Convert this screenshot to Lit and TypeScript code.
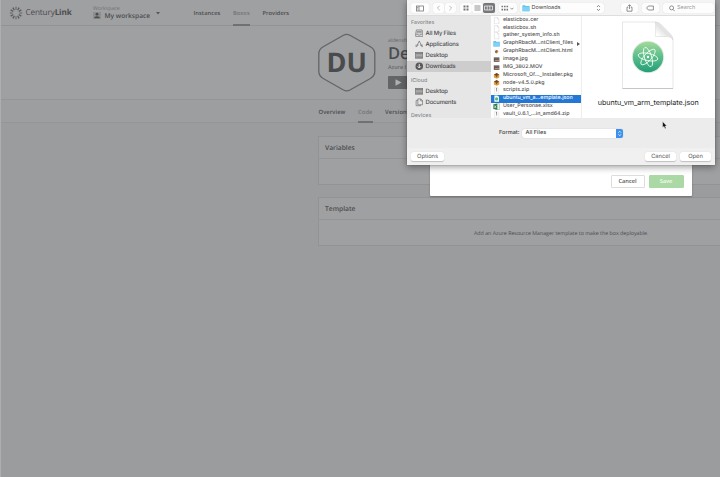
import { LitElement, html, css, svg } from "lit";
import { customElement } from "lit/decorators.js";

const files: [string, string][] = [
  ["elasticbox.cer", "doc"],
  ["elasticbox.sh", "doc"],
  ["gather_system_info.sh", "doc"],
  ["GraphRbacM…ntClient_files", "folder"],
  ["GraphRbacM…ntClient.html", "chrome"],
  ["image.jpg", "img"],
  ["IMG_3802.MOV", "img"],
  ["Microsoft_Of…_Installer.pkg", "pkg"],
  ["node-v4.5.0.pkg", "pkg"],
  ["scripts.zip", "zip"],
  ["ubuntu_vm_a…emplate.json", "json"],
  ["User_Personae.xlsx", "xls"],
  ["vault_0.6.1_…in_amd64.zip", "zip"],
];

const fileIcon = (kind: string) => {
  switch (kind) {
    case "folder":
      return svg`<path d="M.5 1.2h2.4l.7.7h3.9v5.3h-7z" fill="#62bfe8"/><path d="M.5 2.8h7v4.4h-7z" fill="#7fd2f5"/>`;
    case "chrome":
      return svg`<path d="M2 .6h4v6.8H2z" fill="#fafafa"/><circle cx="4" cy="4" r="1.8" fill="#d9533f"/><path d="M4 4l1.8 0A1.8 1.8 0 0 1 4 5.8z" fill="#e8c23a"/><path d="M4 5.8A1.8 1.8 0 0 1 2.2 4H4z" fill="#3c9a54"/><circle cx="4" cy="4" r=".7" fill="#49699a"/>`;
    case "img":
      return svg`<rect x=".9" y="1.6" width="6.2" height="4.9" fill="#5b5050"/><path d="M1.3 5.5l2-1.7 1.2.9 1.2-1.2 1.1 1.4v1z" fill="#a99488"/><path d="M1.3 2.1h5.4v.7H1.3z" fill="#84797a"/>`;
    case "pkg":
      return svg`<path d="M1 3l3-2 3 2v3L4 7.6 1 6z" fill="#dfa13c"/><path d="M1 3l3 1.5L7 3 4 1z" fill="#70462c"/><path d="M3.3 4.2h1.4v1.6H3.3z" fill="#8a5528"/>`;
    case "zip":
      return svg`<path d="M1.6.5h3.4L6.5 2v5.5H1.6z" fill="#fcfcfc" stroke="#d5d5d5" stroke-width=".4"/><path d="M4 1v4M3.3 1.8h1" stroke="#777" stroke-width=".8"/>`;
    case "json":
      return svg`<path d="M1.5.5h3.5L6.7 2v5.5H1.5z" fill="#f3fff7"/><circle cx="4" cy="4.4" r="1.8" fill="#54b980"/>`;
    case "xls":
      return svg`<path d="M3 .8h4.4v6.5H3z" fill="#eef7ef" stroke="#6fa37e" stroke-width=".5"/><path d="M.4 1.3l4.4-.5v6.6l-4.4-.6z" fill="#2c7c4c"/><path d="M1.5 2.8l2 2.8M3.5 2.8l-2 2.8" stroke="#fff" stroke-width=".7"/>`;
    default:
      return svg`<path d="M1.5.4h3.4l1.7 1.8v5.4H1.5z" fill="#fff" stroke="#c6c6c6" stroke-width=".45"/><path d="M4.9.4v1.8h1.7" fill="none" stroke="#c6c6c6" stroke-width=".45"/>`;
  }
};

const sideIcon = (kind: string) => {
  switch (kind) {
    case "all":
      return svg`<path d="M1.5 1h6l.8 4v2.8H.7V5z"/><path d="M2 2.6h5M1.8 4h5.4M.8 5.5h2.1l.6.9h2l.6-.9h2.1"/>`;
    case "apps":
      return svg`<path d="M1.5 7.5L4.5 1l3 6.5M.5 5.4h3.2M5.4 5.4h3.2M.7 7.3l.5-.8M8.3 7.3l-.5-.8"/>`;
    case "desk":
      return svg`<rect x=".7" y="1.4" width="7.6" height="6.2" fill="#a9a9aa"/><path d="M.7 2.8h7.6M1.5 6.4h6"/>`;
    case "down":
      return svg`<circle cx="4.5" cy="4.5" r="4" fill="#57575a" stroke="none"/><path d="M4.5 2v4M2.8 4.6l1.7 1.8 1.7-1.8" stroke="#eee" stroke-width="1"/>`;
    default:
      return svg`<path d="M3 1h3.2L8 2.8v4.4H3zM3 2.5H1.2v5.7h4.6v-1M6 1v2h2"/>`;
  }
};

@customElement("app-sidebar-item")
export class SidebarItem extends LitElement {
  static properties = { icon: {}, label: {}, active: { type: Boolean, reflect: true } };
  declare icon: string;
  declare label: string;
  declare active: boolean;
  static styles = css`
    :host { display: flex; align-items: center; height: 11.2px; padding-left: 7.5px; gap: 2.6px; color: #48484a; font: 500 5.85px/9px Inter, sans-serif; letter-spacing: -.13px; white-space: nowrap; }
    :host([active]) { background: #cdcdce; }
    svg { width: 8.5px; height: 8.5px; fill: none; stroke: #69696b; stroke-width: 0.7; flex: none; }
  `;
  render() {
    return html`<svg viewBox="0 0 9 9">${sideIcon(this.icon)}</svg><span>${this.label}</span>`;
  }
}

@customElement("app-file-dialog")
export class FileDialog extends LitElement {
  static styles = css`
    :host { display: flex; flex-direction: column; width: 308px; height: 165px; background: #ececec; box-shadow: 0 2px 7px rgba(0,0,0,.4), 0 0 1px rgba(0,0,0,.4); font-family: Inter, sans-serif; color: #444; box-sizing: border-box; overflow: hidden; }
    .bar { height: 16px; flex: none; display: flex; align-items: center; background: #f4f4f4; border-bottom: 1px solid #dedede; box-sizing: border-box; padding: 1px 0 0 4px; }
    .b { height: 10px; background: #fdfdfd; border-radius: 2px; box-shadow: 0 0 1px rgba(0,0,0,.17); display: flex; align-items: center; justify-content: center; box-sizing: border-box; flex: none; }
    .b svg { fill: none; stroke: #777; stroke-width: .8; flex: none; }
    .w11 { width: 11.5px; } .w17 { width: 17px; } .w18 { width: 18px; }
    .panel { width: 18px; }
    .back { margin-left: 3.5px; } .fwd { margin-left: .5px; } .grid { margin-left: 4px; }
    .on { background: #77777a; border-radius: 2px; }
    .on svg { stroke: #eee; }
    .arr { margin-left: 4px; } .path { margin-left: 3px; width: 84px; justify-content: flex-start; padding: 0 3px 0 2px; gap: 2px; font: 5.5px/9px Inter, sans-serif; }
    .path span { flex: 1; }
    .path .folder { stroke: none; }
    .share { margin-left: 17px; } .tag { margin-left: 4px; }
    .search { margin-left: 4px; width: 51px; justify-content: flex-start; gap: 2.5px; padding-left: 6px; color: #999; font: 5.5px/9px Inter, sans-serif; }
    .body { display: flex; height: 102px; flex: none; }
    .side { width: 83.5px; background: #e6e6e7; padding-top: 1.5px; box-sizing: border-box; overflow: hidden; }
    .head { font: 500 5.3px/10px Inter, sans-serif; color: #88888a; padding-left: 4px; height: 10px; }
    .cloud { margin-top: 3.6px; } .dev { margin-top: 3px; }
    .list { width: 91px; background: #fff; border-right: 1px solid #eee; box-sizing: border-box; overflow: hidden; }
    .row { display: flex; align-items: center; height: 7.85px; gap: 3.2px; padding-left: 2px; font: 450 5.27px/7.8px Inter, sans-serif; white-space: nowrap; color: #505050; }
    .row:first-child { margin-top: .4px; }
    .row svg { width: 7.2px; height: 7.2px; flex: none; }
    .row .name { width: 73px; padding-top: .7px; }
    .sel { background: #2377d5; color: #fff; }
    .row .tri { width: 3px; height: 4px; margin-left: -2.5px; }
    .preview { flex: 1; background: #fff; display: flex; flex-direction: column; align-items: center; padding-top: 4px; }
    .preview svg { width: 56px; height: 72px; }
    .cap { font: 7.15px/10px Inter, sans-serif; color: #242424; margin-top: 5.5px; white-space: nowrap; }
    .format { height: 30px; padding-top: 1px; box-sizing: border-box; flex: none; display: flex; align-items: center; font: 500 5.6px/9px Inter, sans-serif; padding-left: 92px; gap: 3px; }
    .format span { width: 20px; white-space: nowrap; }
    .select { width: 101px; height: 9px; background: #fff; border-radius: 2px; box-shadow: 0 0 1px rgba(0,0,0,.3); display: flex; justify-content: space-between; align-items: center; padding-left: 3.5px; box-sizing: border-box; overflow: hidden; }
    .select svg { width: 7.5px; height: 9px; background: #3d91ee; }
    .foot { height: 17px; display: flex; align-items: center; background: #f0f0f0; padding: 0 4px; gap: 4px; }
    .btn { height: 9.5px; width: 31px; background: #fff; border-radius: 2px; box-shadow: 0 .5px 1px rgba(0,0,0,.2); display: flex; align-items: center; justify-content: center; font: 5.7px/9px Inter, sans-serif; color: #555; }
    .opt { width: 33px; margin: 0 auto 0 0; }
  `;
  render() {
    return html`
      <div class="bar">
        <div class="b panel"><svg width="8" height="7"><rect x=".5" y="1" width="7" height="5"/><path d="M3 1v5M1.2 2.5h1M1.2 4h1"/></svg></div>
        <div class="b w11 back"><svg width="5" height="6"><path d="M3.6.8L1.4 3l2.2 2.2" stroke="#aaa"/></svg></div>
        <div class="b w11 fwd"><svg width="5" height="6"><path d="M1.4.8L3.6 3 1.4 5.2" stroke="#aaa"/></svg></div>
        <div class="b w11 grid"><svg width="6" height="6"><path d="M.5 1.5h2M3.5 1.5h2M.5 4.5h2M3.5 4.5h2" stroke-width="1.8"/></svg></div>
        <div class="b w11"><svg width="7" height="6"><path d="M.5 1h6M.5 3h6M.5 5h6"/></svg></div>
        <div class="b w11 on"><svg width="9" height="6"><path d="M.5 1h8v4h-8zM3.2 1v4M5.8 1v4"/></svg></div>
        <div class="b w18 arr"><svg width="13" height="7"><path d="M.5 1.5h1.6M3 1.5h1.6M5.5 1.5h1.6M.5 4.7h1.6M3 4.7h1.6M5.5 4.7h1.6" stroke-width="1.7"/><path d="M9.4 2.8l1.5 1.5 1.5-1.5"/></svg></div>
        <div class="b path"><svg class="folder" width="8" height="8" viewBox="0 0 8 8">${fileIcon("folder")}</svg><span>Downloads</span><svg width="5" height="8"><path d="M1 3l1.5-1.6L4 3M1 5l1.5 1.6L4 5"/></svg></div>
        <div class="b w17 share"><svg width="7" height="8"><path d="M2.2 3.2H1v4h5v-4H4.8M3.5 5V.8M2 2.2L3.5.7 5 2.2"/></svg></div>
        <div class="b w17 tag"><svg width="8" height="6"><path d="M2.4 1h5v4h-5L.6 3z"/></svg></div>
        <div class="b search"><svg width="6" height="7"><circle cx="2.6" cy="2.9" r="2"/><path d="M4 4.4l1.7 1.8"/></svg>Search</div>
      </div>
      <div class="body">
        <div class="side">
          <div class="head">Favorites</div>
          <app-sidebar-item icon="all" label="All My Files"></app-sidebar-item>
          <app-sidebar-item icon="apps" label="Applications"></app-sidebar-item>
          <app-sidebar-item icon="desk" label="Desktop"></app-sidebar-item>
          <app-sidebar-item icon="down" label="Downloads" active></app-sidebar-item>
          <div class="head cloud">iCloud</div>
          <app-sidebar-item icon="desk" label="Desktop"></app-sidebar-item>
          <app-sidebar-item icon="docs" label="Documents"></app-sidebar-item>
          <div class="head dev">Devices</div>
        </div>
        <div class="list">
          ${files.map(([name, kind]) => html`<div class="row ${kind === "json" ? "sel" : ""}">
            <svg viewBox="0 0 8 8">${fileIcon(kind)}</svg><span class="name">${name}</span>
            ${kind === "folder" ? html`<svg class="tri" viewBox="0 0 3 4"><path d="M0 0l3 2-3 2z" fill="#555"/></svg>` : ""}
          </div>`)}
        </div>
        <div class="preview">
          <svg viewBox="0 0 56 72">
            <defs>
              <linearGradient id="g" x1="0" y1="0" x2="0" y2="1"><stop offset="0" stop-color="#a3d99a"/><stop offset=".5" stop-color="#5abd8b"/><stop offset="1" stop-color="#239e78"/></linearGradient>
              <linearGradient id="p" x1="0" y1="1" x2="1" y2="0"><stop offset=".2" stop-color="#fff"/><stop offset=".5" stop-color="#e2e2e2"/><stop offset="1" stop-color="#fff"/></linearGradient>
            </defs>
            <path d="M2.5 2h32.5q3 0 5.5 2.7L50.5 15q2.5 2.8 2.5 6v47.5H2.5z" fill="#fff" stroke="#dcdcdc" stroke-width=".7"/>
            <path d="M2.5 68.5H53" stroke="#c5c5c5" stroke-width="1"/>
            <path d="M35 2q.6 1 .6 4v10.5h11.5q4.5 0 5.9 3.5 0-3-2.5-5.8L40.5 4Q38 2 35 2z" fill="url(#p)" stroke="#d2d2d2" stroke-width=".5"/>
            <circle cx="28" cy="37" r="16.2" fill="#e5eae7"/><circle cx="28" cy="37" r="15.2" fill="url(#g)"/>
            <g fill="none" stroke="#eefcf0" stroke-width=".9">
              <ellipse cx="28" cy="37" rx="3.6" ry="10" transform="rotate(-18 28 37)"/>
              <ellipse cx="28" cy="37" rx="3.6" ry="10" transform="rotate(42 28 37)"/>
              <ellipse cx="28" cy="37" rx="3.6" ry="10" transform="rotate(102 28 37)"/>
            </g><circle cx="28" cy="37" r="1.2" fill="#fff"/>
          </svg>
          <div class="cap">ubuntu_vm_arm_template.json</div>
        </div>
      </div>
      <div class="format"><span>Format:</span><div class="select">All Files<svg viewBox="0 0 7 9"><path d="M2.2 3.7l1.3-1.4 1.3 1.4M2.2 5.3l1.3 1.4 1.3-1.4" fill="none" stroke="#fff" stroke-width=".8"/></svg></div></div>
      <div class="foot"><div class="btn opt">Options</div><div class="btn">Cancel</div><div class="btn">Open</div></div>`;
  }
}

@customElement("app-root")
export class AppRoot extends LitElement {
  static styles = css`
    :host { display: block; position: relative; width: 720px; height: 477px; overflow: hidden; background: #9b9c9e; color: #4b4c4e; font-family: "Open Sans", sans-serif; text-rendering: geometricPrecision; }
    .top { height: 26px; box-sizing: border-box; border-bottom: 1px solid #929395; background: #9fa0a2; display: flex; align-items: flex-start; padding-left: 9px; }
    .logo { width: 14px; height: 14px; margin-top: 6px; }
    .brand { margin: 6px 0 0 2.5px; font: 8.2px/14px "Open Sans", sans-serif; letter-spacing: -.15px; width: 67.5px; white-space: nowrap; }
    .brand b { font-weight: 700; }
    .ws { width: 60px; padding-top: 4.5px; white-space: nowrap; }
    .wl { font-size: 5.2px; line-height: 7px; color: #737476; }
    .wn { display: flex; align-items: center; gap: 3.5px; font-weight: 600; font-size: 6.6px; line-height: 8px; }
    .wn svg { width: 8px; height: 7px; background: #8d8e90; }
    .caret { width: 4px; height: 3px; margin: 12px 33.5px 0 3px; }
    nav { display: flex; }
    .top nav { gap: 12.6px; height: 26px; }
    nav span { box-sizing: border-box; font-weight: 600; font-size: 5.7px; line-height: 26px; white-space: nowrap; letter-spacing: .08px; }
    nav .cur { color: #747577; border-bottom: 2px solid #707173; }
    .hero { height: 74px; box-sizing: border-box; background: #9fa0a2; border-bottom: 1px solid #949597; padding: 7px 0 0 318px; display: flex; }
    .hex { width: 58px; height: 59px; }
    .hex text { font: 700 27px "Open Sans", sans-serif; }
    .meta { margin-left: 12px; width: 19px; white-space: nowrap; }
    .own { font-size: 5.2px; line-height: 7px; margin-top: 4px; color: #67686a; }
    .title { font-size: 16.5px; line-height: 18px; font-weight: 600; }
    .kind { font-size: 5.4px; line-height: 7px; margin: 1.5px 0 5.5px; color: #67686a; font-weight: 600; }
    .play { height: 13px; background: #646567; border-radius: 1px 0 0 1px; display: flex; align-items: center; padding-left: 7px; }
    .tabs { height: 23px; box-sizing: border-box; background: #9d9ea0; border-bottom: 1px solid #949597; padding-left: 318.5px; gap: 12.6px; }
    .tabs span { line-height: 24px; height: 23px; font-size: 5.8px; }
    .main { padding: 13px 0 0 318px; display: flex; flex-direction: column; gap: 13px; }
    .card { height: 49px; box-sizing: border-box; border: 1px solid #929395; border-right: 0; border-radius: 1px 0 0 1px; background: #9fa0a2; }
    .card:last-child { margin-top: -1px; }
    .ch { height: 21px; border-bottom: 1px solid #949597; padding-left: 6px; font-size: 6.7px; line-height: 21px; font-weight: 600; }
    .cb { font-size: 5.27px; line-height: 26px; padding-left: 155px; white-space: nowrap; }
    .modal { position: absolute; left: 430px; top: 0; width: 262px; height: 196px; background: #fff; border-radius: 0 0 1px 1px; box-shadow: 0 1px 2px rgba(0,0,0,.3); box-sizing: border-box; padding: 0 8.5px 8.5px 0; display: flex; justify-content: flex-end; align-items: flex-end; gap: 4px; }
    .mb { width: 34px; height: 13px; box-sizing: border-box; border: 1px solid #ddd; border-radius: 1px; font-size: 5.7px; line-height: 11px; font-weight: 600; text-align: center; color: #555; background: #fff; }
    .save { background: #aad9a5; border-color: #aad9a5; color: #f4fbf3; width: 35px; }
    app-file-dialog { position: absolute; left: 407px; top: 0; }
    .cursor { position: absolute; left: 662px; top: 121px; width: 6px; height: 9px; }
    .edge { position: absolute; left: 0; top: 0; width: 1px; height: 477px; background: #adaeb0; }
  `;
  render() {
    const rays = Array.from({ length: 12 }, (_, i) => i);
    return html`
      <header class="top">
        <svg class="logo" viewBox="0 0 14 14">${rays.map((i) => svg`<path d="M6.2 .8h1.6l-.3 3.1h-1z" fill="${i % 3 ? "#58595b" : "#707173"}" transform="rotate(${i * 30} 7 7)"/>`)}</svg>
        <div class="brand">Century<b>Link</b></div>
        <div class="ws"><div class="wl">Workspace</div><div class="wn"><svg viewBox="0 0 8 7"><circle cx="4" cy="2.2" r="1.4" fill="#4b4c4e"/><path d="M1.2 6.2q0-2 2.8-2t2.8 2z" fill="#4b4c4e"/></svg>My workspace</div></div>
        <svg class="caret" viewBox="0 0 4 3"><path d="M0 0h4L2 2.5z" fill="#555658"/></svg>
        <nav><span>Instances</span><span class="cur">Boxes</span><span>Providers</span></nav>
      </header>
      <section class="hero">
        <svg class="hex" viewBox="0 0 58 59">
          <path d="M25.5 2.2q3.2-1.7 6.4 0l20.5 11.5q4.4 2.6 4.4 7.2v17.4q0 4.6-4.4 7.2L31.9 57q-3.2 1.7-6.4 0L5.2 45.5Q.8 42.9.8 38.3V20.9q0-4.6 4.4-7.2z" fill="#a0a1a3" stroke="#646567" stroke-width="1.3"/>
          <text x="28.8" y="39.2" text-anchor="middle" fill="#4a4b4d">DU</text>
        </svg>
        <div class="meta">
          <div class="own">aldensh</div><div class="title">De</div><div class="kind">Azure I</div>
          <div class="play"><svg width="7" height="7"><path d="M.5.3l6 3.2-6 3.2z" fill="#b0b1b3"/></svg></div>
        </div>
      </section>
      <nav class="tabs"><span>Overview</span><span class="cur">Code</span><span>Versions</span></nav>
      <main class="main">
        <section class="card"><div class="ch">Variables</div></section>
        <section class="card"><div class="ch">Template</div><div class="cb">Add an Azure Resource Manager template to make the box deployable.</div></section>
      </main>
      <div class="modal"><div class="mb">Cancel</div><div class="mb save">Save</div></div>
      <app-file-dialog></app-file-dialog>
      <svg class="cursor" viewBox="0 0 6 9"><path d="M.6.6v6l1.4-1.2 1 2.4 1.1-.5-1-2.2h1.7z" fill="#111" stroke="#fff" stroke-width=".4"/></svg>
      <div class="edge"></div>`;
  }
}
